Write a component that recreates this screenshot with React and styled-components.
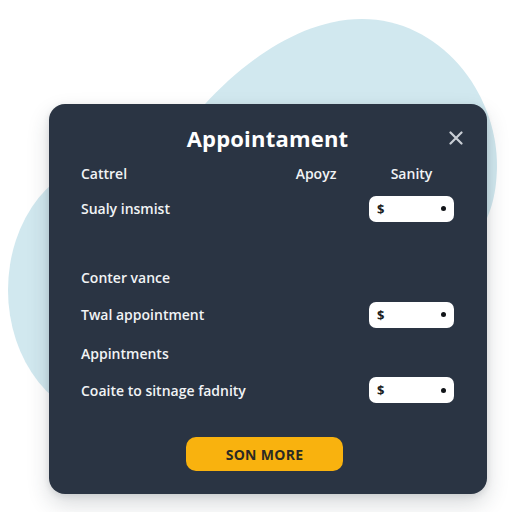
import React from "react";
import styled, { createGlobalStyle } from "styled-components";

const Global = createGlobalStyle`
  html, body { margin: 0; padding: 0; background: #ffffff; }
  body { font-family: "Open Sans", "Liberation Sans", sans-serif; }
`;

const Page = styled.div`
  position: relative;
  width: 512px;
  height: 512px;
  overflow: hidden;
  box-sizing: border-box;
  padding: 104px 0 0 49px;
`;

const Backdrop = styled.svg`
  position: absolute;
  inset: 0;
  width: 512px;
  height: 512px;
  z-index: 0;
`;

const Card = styled.section`
  position: relative;
  z-index: 1;
  width: 438px;
  height: 390px;
  box-sizing: border-box;
  padding: 16px 33px 23px 32px;
  background: #2a3443;
  border-radius: 16px;
  box-shadow: 0 10px 22px rgba(40, 50, 60, 0.18), 0 2px 6px rgba(40, 50, 60, 0.12);
  display: flex;
  flex-direction: column;
  color: #f3f5f7;
`;

const Header = styled.header`
  display: grid;
  grid-template-columns: 1fr auto 1fr;
  align-items: center;
  height: 36px;
`;

const Title = styled.h1`
  grid-column: 2;
  margin: 0;
  font-size: 22px;
  font-weight: 700;
  letter-spacing: 0.2px;
  color: #ffffff;
`;

const Close = styled.button`
  grid-column: 3;
  justify-self: end;
  margin-right: -10px;
  width: 16px;
  height: 16px;
  padding: 0;
  border: 0;
  background: none;
  display: flex;
  align-items: center;
  justify-content: center;
`;

const Table = styled.div`
  display: flex;
  flex-direction: column;
`;

const Row = styled.div`
  display: grid;
  grid-template-columns: 1fr 80px 85px;
  column-gap: 13px;
  align-items: center;
  height: ${(p) => p.$h}px;
  font-size: 14px;
  font-weight: 600;
`;

const Label = styled.span`
  color: #f1f3f5;
  white-space: nowrap;
`;

const ColHead = styled.span`
  text-align: center;
  color: #f1f3f5;
  grid-column: ${(p) => p.$col};
`;

const Field = styled.div`
  grid-column: 3;
  height: 26px;
  border-radius: 7px;
  background: #ffffff;
  display: flex;
  align-items: center;
  justify-content: space-between;
  padding: 0 8px 0 8px;
  box-sizing: border-box;
  color: #1b1e22;
  font-size: 13px;
  font-weight: 700;
`;

const Dot = styled.span`
  width: 5px;
  height: 5px;
  border-radius: 50%;
  background: #111418;
`;

const Footer = styled.div`
  margin-top: auto;
  display: flex;
  justify-content: center;
  padding-right: 6px;
`;

const Primary = styled.button`
  width: 157px;
  height: 34px;
  border: 0;
  border-radius: 10px;
  background: #f9b20e;
  color: #2b2a24;
  font-family: "Open Sans", "Liberation Sans", sans-serif;
  font-size: 14px;
  font-weight: 700;
  letter-spacing: 0.3px;
`;

const rows = [
  { label: "Sualy insmist", h: 35, field: true },
  { label: "", h: 34 },
  { label: "Conter vance", h: 35 },
  { label: "Twal appointment", h: 39, field: true },
  { label: "Appintments", h: 38 },
  { label: "Coaite to sitnage fadnity", h: 36, field: true },
];

export default function App() {
  return (
    <>
      <Global />
      <Page>
        <Backdrop viewBox="0 0 512 512">
          <path
            d="M190 130 L205 104 C240 66 298 19 362 19 C440 19 498 92 497 168 C496 198 490 214 480 232 L300 320 Z"
            fill="#d1e8ef"
          />
          <ellipse cx="112" cy="290" rx="104" ry="130" fill="#d1e8ef" />
        </Backdrop>
        <Card>
          <Header>
            <Title>Appointament</Title>
            <Close aria-label="Close">
              <svg width="14" height="14" viewBox="0 0 14 14">
                <path d="M1.5 1.5 L12.5 12.5 M12.5 1.5 L1.5 12.5" stroke="#c9ced5" strokeWidth="2.2" strokeLinecap="round" />
              </svg>
            </Close>
          </Header>
          <Table>
            <Row $h={35}>
              <Label>Cattrel</Label>
              <ColHead $col={2}>Apoyz</ColHead>
              <ColHead $col={3}>Sanity</ColHead>
            </Row>
            {rows.map((r, i) => (
              <Row key={i} $h={r.h}>
                <Label>{r.label}</Label>
                {r.field && (
                  <Field>
                    <span>$</span>
                    <Dot />
                  </Field>
                )}
              </Row>
            ))}
          </Table>
          <Footer>
            <Primary>SON MORE</Primary>
          </Footer>
        </Card>
      </Page>
    </>
  );
}
